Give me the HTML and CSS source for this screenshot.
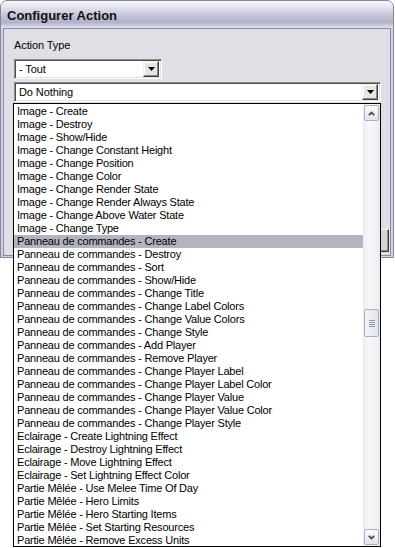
FILE: index.html
```html
<!DOCTYPE html>
<html lang="fr">

<head>
    <meta charset="UTF-8">
    <title>Configurer Action</title>
    <link rel="stylesheet" href="styles.css">
</head>

<body>
    <div class="screen">
        <!-- Fenêtre -->
        <div class="window">
            <div class="titlebar">Configurer Action</div>
            <div class="panel">
                <div class="label">Action Type</div>
                <div class="combo combo-small">
                    <span class="combo-text">- Tout</span>
                    <span class="combo-btn"><svg width="7" height="4" viewBox="0 0 7 4"><polygon points="0,0 7,0 3.5,4" fill="#000"/></svg></span>
                </div>
                <div class="combo combo-wide">
                    <span class="combo-text">Do Nothing</span>
                    <span class="combo-btn"><svg width="7" height="4" viewBox="0 0 7 4"><polygon points="0,0 7,0 3.5,4" fill="#000"/></svg></span>
                </div>
                <div class="buttons">
                    <div class="btn">OK</div>
                </div>
            </div>
        </div>

        <!-- Liste déroulante -->
        <div class="dropdown">
            <ul class="options">
                <li>Image - Create</li>
                <li>Image - Destroy</li>
                <li>Image - Show/Hide</li>
                <li>Image - Change Constant Height</li>
                <li>Image - Change Position</li>
                <li>Image - Change Color</li>
                <li>Image - Change Render State</li>
                <li>Image - Change Render Always State</li>
                <li>Image - Change Above Water State</li>
                <li>Image - Change Type</li>
                <li class="selected">Panneau de commandes - Create</li>
                <li>Panneau de commandes - Destroy</li>
                <li>Panneau de commandes - Sort</li>
                <li>Panneau de commandes - Show/Hide</li>
                <li>Panneau de commandes - Change Title</li>
                <li>Panneau de commandes - Change Label Colors</li>
                <li>Panneau de commandes - Change Value Colors</li>
                <li>Panneau de commandes - Change Style</li>
                <li>Panneau de commandes - Add Player</li>
                <li>Panneau de commandes - Remove Player</li>
                <li>Panneau de commandes - Change Player Label</li>
                <li>Panneau de commandes - Change Player Label Color</li>
                <li>Panneau de commandes - Change Player Value</li>
                <li>Panneau de commandes - Change Player Value Color</li>
                <li>Panneau de commandes - Change Player Style</li>
                <li>Eclairage - Create Lightning Effect</li>
                <li>Eclairage - Destroy Lightning Effect</li>
                <li>Eclairage - Move Lightning Effect</li>
                <li>Eclairage - Set Lightning Effect Color</li>
                <li>Partie Mêlée - Use Melee Time Of Day</li>
                <li>Partie Mêlée - Hero Limits</li>
                <li>Partie Mêlée - Hero Starting Items</li>
                <li>Partie Mêlée - Set Starting Resources</li>
                <li>Partie Mêlée - Remove Excess Units</li>
            </ul>
            <div class="scrollbar">
                <div class="sb-btn"><svg width="7" height="5" viewBox="0 0 7 5"><polyline points="0.8,4.2 3.5,1.5 6.2,4.2" fill="none" stroke="#4a4c5e" stroke-width="1.8"/></svg></div>
                <div class="sb-track">
                    <div class="sb-thumb">
                        <span class="grip"></span>
                    </div>
                </div>
                <div class="sb-btn"><svg width="7" height="5" viewBox="0 0 7 5"><polyline points="0.8,0.8 3.5,3.5 6.2,0.8" fill="none" stroke="#4a4c5e" stroke-width="1.8"/></svg></div>
            </div>
        </div>
    </div>
</body>

</html>
```

FILE: styles.css
```css
body {
    margin: 0;
    padding: 0;
    background: #fff;
    font-family: 'Liberation Sans', Arial, sans-serif;
    font-size: 11px;
    color: #000;
}

.screen {
    position: relative;
    width: 395px;
    height: 548px;
    overflow: hidden;
}

/* Fenêtre */
.window {
    width: 394px;
    height: 258px;
    box-sizing: border-box;
    border: 1px solid #8585a3;
    border-radius: 7px 7px 0 0;
    background: #d2d2e2;
    padding: 0 2px 1px;
    display: flex;
    flex-direction: column;
}

.titlebar {
    height: 27px;
    margin: 0 -2px;
    padding-left: 6px;
    border-radius: 6px 6px 0 0;
    background: linear-gradient(to bottom, #f7f7fa 0%, #e8e8f0 18%, #c9c9dc 50%, #afafc8 78%, #c6c6d9 88%, #e3e3ec 100%);
    font-size: 13px;
    font-weight: bold;
    line-height: 29px;
    color: #111;
}

.panel {
    height: 228px;
    box-sizing: border-box;
    border: 1px solid #8a8aa8;
    background: #e0dfe5;
    padding: 10px 0 3px 10px;
    display: flex;
    flex-direction: column;
}

.label {
    line-height: 13px;
    height: 13px;
    letter-spacing: -0.1px;
}

/* Listes déroulantes */
.combo {
    height: 20px;
    box-sizing: border-box;
    border: 1px solid;
    border-color: #8a8a8a #fff #fff #8a8a8a;
    box-shadow: inset 1px 1px 0 #505050, inset -1px -1px 0 #e4e2dc;
    background: #fff;
    display: flex;
    align-items: center;
    padding: 2px;
}

.combo-small {
    width: 148px;
    margin-top: 7px;
}

.combo-wide {
    width: 367px;
    margin-top: 3px;
}

.combo-text {
    flex: 1;
    padding-left: 2px;
    line-height: 14px;
    letter-spacing: -0.1px;
}

.combo-btn {
    width: 16px;
    height: 16px;
    box-sizing: border-box;
    border: 1px solid;
    border-color: #f0efea #404040 #404040 #f0efea;
    box-shadow: inset -1px -1px 0 #8a8a8a, inset 1px 1px 0 #fff;
    background: #e6e5e2;
    display: flex;
    align-items: center;
    justify-content: center;
}

.buttons {
    margin-top: auto;
    display: flex;
    justify-content: flex-end;
    padding-right: 1px;
}

.btn {
    width: 75px;
    height: 23px;
    box-sizing: border-box;
    border: 1px solid;
    border-color: #fff #404040 #404040 #fff;
    box-shadow: inset -1px -1px 0 #8a8a8a;
    background: #d6d4d0;
    text-align: center;
    line-height: 21px;
}

/* Menu ouvert */
.dropdown {
    position: absolute;
    top: 103px;
    left: 13px;
    width: 368px;
    height: 444px;
    box-sizing: border-box;
    border: 1px solid #000;
    background: #fff;
    display: flex;
}

.options {
    list-style: none;
    margin: 0;
    padding: 1px 0 0;
    flex: 1;
}

.options li {
    height: 13px;
    line-height: 13px;
    padding-left: 3px;
    white-space: nowrap;
    letter-spacing: -0.2px;
}

.options li.selected {
    background: #b4b4c1;
}

.scrollbar {
    width: 17px;
    padding: 1px;
    box-sizing: border-box;
    background: linear-gradient(to right, #ebebf2 0%, #f8f8fb 35%, #f3f3f7 70%, #e9e9f0 100%);
    display: flex;
    flex-direction: column;
}

.sb-btn {
    height: 16px;
    width: 15px;
    box-sizing: border-box;
    border: 1px solid #a9b0c6;
    border-radius: 2px;
    background: linear-gradient(to bottom, #fdfdfe, #e2e3ec);
    display: flex;
    align-items: center;
    justify-content: center;
}

.sb-track {
    flex: 1;
}

.sb-thumb {
    margin-top: 188px;
    height: 28px;
    width: 15px;
    box-sizing: border-box;
    border: 1px solid #a9b0c6;
    border-radius: 2px;
    background: linear-gradient(to right, #f4f4f8, #e3e4ec);
    display: flex;
    align-items: center;
    justify-content: center;
}

.grip {
    width: 6px;
    height: 7px;
    background: repeating-linear-gradient(to bottom, #8d93ad 0, #8d93ad 1px, #f4f4f8 1px, #f4f4f8 2px);
}
```
